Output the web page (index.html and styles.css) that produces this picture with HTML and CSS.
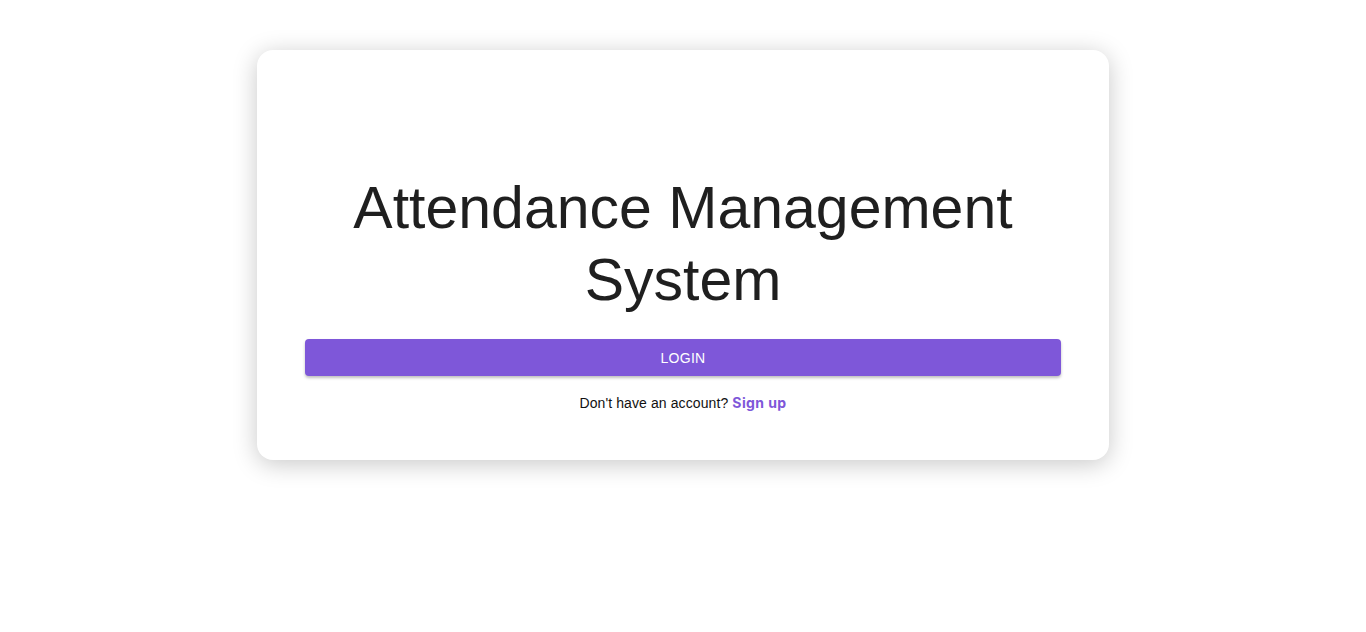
FILE: index.html
```html
<!DOCTYPE html>
<html>
<head>
<meta charset="utf-8">
<link rel="stylesheet" href="styles.css">
</head>
<body>
<div class="page">
  <div class="card">
    <h1 class="title">Attendance Management System</h1>
    <button class="login-btn">LOGIN</button>
    <p class="signup">Don't have an account? <a class="signup-link" href="#">Sign up</a></p>
  </div>
</div>
</body>
</html>
```
FILE: styles.css
```css
html, body {
  margin: 0;
  padding: 0;
  background: #ffffff;
  font-family: "Liberation Sans", Arial, sans-serif;
}
.page {
  display: flex;
  justify-content: center;
  padding: 50px 0 100px;
}
.card {
  width: 852px;
  box-sizing: border-box;
  padding: 122px 48px 49px;
  background: #fff;
  border-radius: 16px;
  box-shadow: 0 4px 24px rgba(0, 0, 0, 0.22);
  display: flex;
  flex-direction: column;
  align-items: center;
}
.title {
  margin: 0;
  font-size: 59px;
  font-weight: 400;
  line-height: 72px;
  color: #1f1f1f;
  text-align: center;
}
.login-btn {
  margin-top: 23px;
  width: 100%;
  height: 37px;
  border: none;
  border-radius: 4px;
  background: #7e57d9;
  color: #fff;
  font-family: "Liberation Sans", Arial, sans-serif;
  font-size: 14px;
  letter-spacing: 0.3px;
  box-shadow: 0 2px 3px rgba(0, 0, 0, 0.25);
}
.signup {
  margin: 18px 0 0;
  font-size: 14px;
  color: #111;
  letter-spacing: 0.1px;
}
.signup-link {
  color: #7e57d9;
  font-family: "Inter", sans-serif;
  font-weight: 700;
  letter-spacing: 0.4px;
  text-decoration: none;
}
```
